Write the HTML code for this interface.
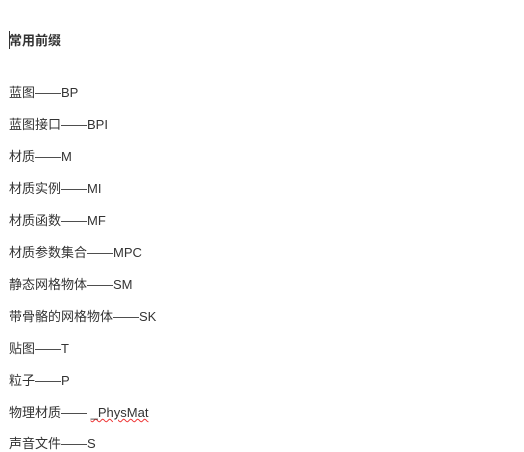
<!DOCTYPE html><html><head><style>
body{margin:0;width:524px;height:440px;overflow:hidden;background:#fff;font-family:"Liberation Sans","Noto Sans CJK SC",sans-serif;color:#333;font-size:13px}
div.l{position:absolute;left:9px;line-height:16px;white-space:nowrap}
.t{font-weight:bold}
.cur{position:absolute;left:9px;top:31px;width:1px;height:18px;background:#333}
.u{text-decoration:underline wavy #e33;text-decoration-thickness:1px}
</style></head><body>
<div class="cur"></div>
<div class="l t" style="top:33px">常用前缀</div>
<div class="l" style="top:85px">蓝图——BP</div>
<div class="l" style="top:117px">蓝图接口——BPI</div>
<div class="l" style="top:149px">材质——M</div>
<div class="l" style="top:181px">材质实例——MI</div>
<div class="l" style="top:213px">材质函数——MF</div>
<div class="l" style="top:245px">材质参数集合——MPC</div>
<div class="l" style="top:277px">静态网格物体——SM</div>
<div class="l" style="top:309px">带骨骼的网格物体——SK</div>
<div class="l" style="top:341px">贴图——T</div>
<div class="l" style="top:373px">粒子——P</div>
<div class="l" style="top:405px">物理材质—— <span class="u">_PhysMat</span></div>
<div class="l" style="top:436px">声音文件——S</div>
</body></html>
